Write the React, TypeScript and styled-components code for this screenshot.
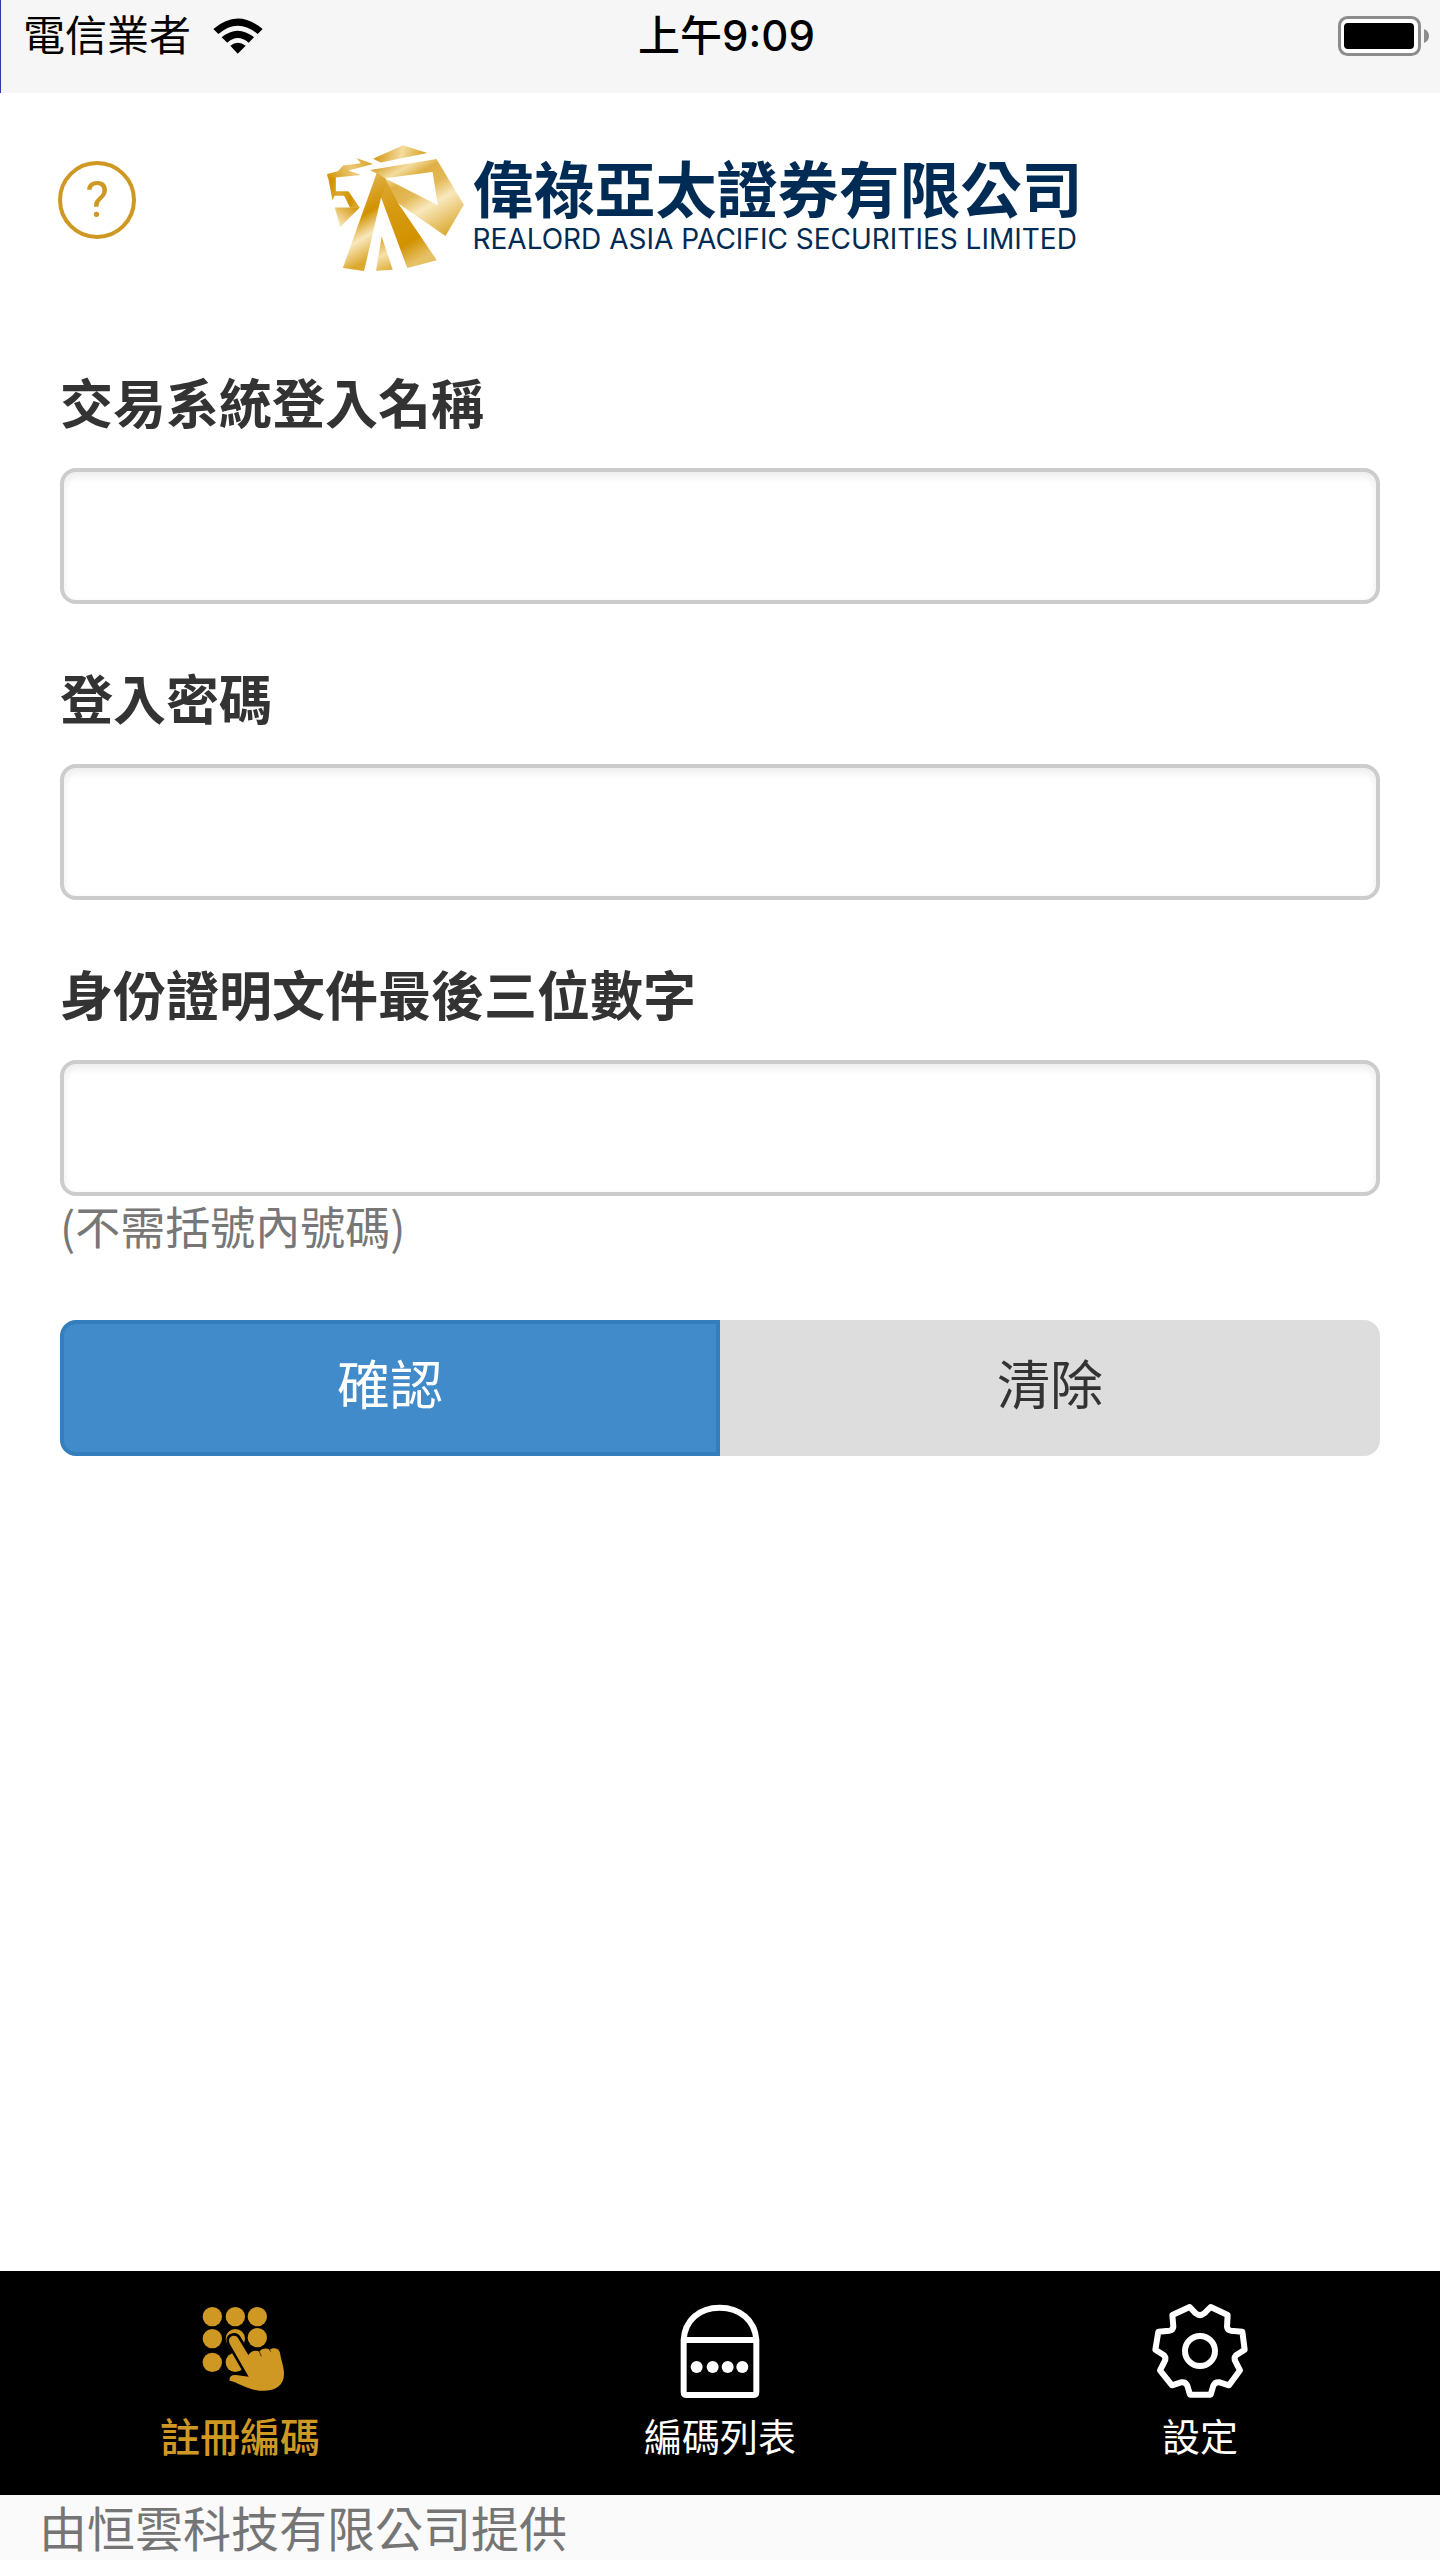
import React, { useState } from "react";
import styled, { createGlobalStyle, css } from "styled-components";

const gold = "#cf9823";
const navy = "#002b54";
const sans = `"Noto Sans CJK TC", "Liberation Sans", sans-serif`;

const GlobalStyle = createGlobalStyle`
  *, *::before, *::after { box-sizing: border-box; }
  body { margin: 0; background: #fff; color: #333; font-family: ${sans}; }
  button, input { font-family: inherit; }
`;

const Page = styled.div`
  display: flex;
  flex-direction: column;
  min-height: 100vh;
`;

const StatusBar = styled.div`
  display: grid;
  grid-template-columns: 1fr auto 1fr;
  align-items: center;
  height: 93px;
  padding: 0 10px 22px 22px;
  border-left: 1px solid #3038a8;
  background: #f6f6f6;
  color: #000;
  font-family: Inter, ${sans};
  font-size: 42px;
  line-height: 60px;
`;

const Carrier = styled.div`
  display: flex;
  align-items: center;
  gap: 22px;
`;

const Clock = styled.time`
  font-weight: 500;
`;

const Battery = styled.svg`
  justify-self: end;
`;

const Header = styled.header`
  display: grid;
  grid-template-columns: 78px 1fr 78px;
  align-items: start;
  padding: 52px 60px 0 58px;
`;

const HelpButton = styled.button`
  width: 78px;
  height: 78px;
  margin-top: 16px;
  padding: 0;
  border: 4px solid ${gold};
  border-radius: 50%;
  background: none;
  color: ${gold};
  font-family: Roboto, sans-serif;
  font-size: 50px;
  font-weight: 400;
  line-height: 68px;
`;

const Brand = styled.div`
  display: flex;
  justify-content: center;
  gap: 8px;
  padding-right: 28px;
  color: ${navy};
`;

const BrandText = styled.div`
  display: flex;
  flex-direction: column;
  padding-top: 6px;
  white-space: nowrap;
`;

const BrandName = styled.span`
  font-size: 61px;
  font-weight: 700;
  line-height: 72px;
`;

const BrandLatin = styled.span`
  font-family: Inter, sans-serif;
  font-size: 28px;
  line-height: 32px;
`;

const Form = styled.form`
  flex: 1;
  padding: 93px 60px 60px;
`;

const Field = styled.div`
  display: flex;
  flex-direction: column;
  margin-bottom: 56px;
`;

const Label = styled.label`
  margin-bottom: 30px;
  font-size: 53px;
  font-weight: 700;
  line-height: 74px;
`;

const TextInput = styled.input`
  width: 100%;
  height: 136px;
  padding: 24px 40px;
  border: 4px solid #ccc;
  border-radius: 16px;
  background: #fff;
  box-shadow: inset 0 4px 8px rgba(0, 0, 0, 0.08);
  color: #555;
  font-size: 53px;
  outline: none;
`;

const Hint = styled.small`
  margin-bottom: 8px;
  color: #777;
  font-size: 45px;
  line-height: 60px;
`;

const Actions = styled.div`
  display: flex;
`;

const ActionButton = styled.button<{ $primary?: boolean }>`
  flex: 1;
  height: 136px;
  padding: 0 0 12px;
  border: 4px solid #ddd;
  border-radius: 0 16px 16px 0;
  background: #ddd;
  color: #333;
  font-size: 53px;
  line-height: 74px;
  ${(p) =>
    p.$primary &&
    css`
      border-color: #357ebd;
      border-radius: 16px 0 0 16px;
      background: #428bca;
      color: #fff;
    `}
`;

const TabBar = styled.nav`
  display: grid;
  grid-template-columns: repeat(3, 1fr);
  height: 224px;
  padding-top: 32px;
  background: #000;
`;

const Tab = styled.a<{ $active?: boolean }>`
  display: flex;
  flex-direction: column;
  align-items: center;
  gap: 8px;
  color: ${(p) => (p.$active ? gold : "#fff")};
  font-size: ${(p) => (p.$active ? 40 : 38)}px;
  font-weight: ${(p) => (p.$active ? 500 : 400)};
  line-height: 56px;
  text-decoration: none;
`;

const Footer = styled.footer`
  padding: 0 39px 3px;
  background: #fafafa;
  color: #757575;
  font-size: 48px;
  line-height: 62px;
`;

const WifiIcon = () => (
  <svg width="50" height="36" viewBox="640 50 150 108" aria-hidden="true">
    <path d="M641 83Q714 20 789 83L774 98Q714 48 656 98Z" />
    <path d="M666 108Q714 68 763 108L747 124Q714 96 683 124Z" />
    <path d="M692 133Q714 116 738 133L714 157Z" />
  </svg>
);

const BatteryIcon = () => (
  <Battery width="92" height="40" viewBox="0 0 92 40" role="img" aria-label="電池">
    <rect x="1.5" y="1.5" width="80" height="37" rx="8" fill="#fff" stroke="#8c8c8c" strokeWidth="3" />
    <rect x="6" y="7" width="70" height="26" rx="4" />
    <path d="M86 13q5 2 5 7t-5 7z" fill="#8c8c8c" />
  </Battery>
);

const LionLogo = () => (
  <svg width="137" height="126" viewBox="54 44 411 379" aria-hidden="true">
    <defs>
      <linearGradient id="crown" gradientUnits="userSpaceOnUse" x1="205" y1="60" x2="350" y2="90">
        <stop offset="0" stopColor="#d79c1c" />
        <stop offset=".5" stopColor="#f3dca0" />
        <stop offset="1" stopColor="#d79c14" />
      </linearGradient>
      <linearGradient id="brow" gradientUnits="userSpaceOnUse" x1="54" y1="150" x2="190" y2="90">
        <stop offset="0" stopColor="#d29200" />
        <stop offset=".55" stopColor="#ebc878" />
        <stop offset="1" stopColor="#d9a322" />
      </linearGradient>
      <linearGradient id="face" gradientUnits="userSpaceOnUse" x1="60" y1="170" x2="150" y2="205">
        <stop offset="0" stopColor="#d29200" />
        <stop offset=".35" stopColor="#dba72c" />
        <stop offset=".75" stopColor="#d29200" />
        <stop offset="1" stopColor="#dba72c" />
      </linearGradient>
      <linearGradient id="chin" gradientUnits="userSpaceOnUse" x1="140" y1="225" x2="90" y2="285">
        <stop offset="0" stopColor="#d29200" />
        <stop offset="1" stopColor="#f8e6b8" />
      </linearGradient>
      <linearGradient id="mane" gradientUnits="userSpaceOnUse" x1="0" y1="0" x2="250" y2="435">
        <stop offset=".4" stopColor="#dca93a" />
        <stop offset=".48" stopColor="#f3dca0" />
        <stop offset=".55" stopColor="#dfb045" />
        <stop offset=".65" stopColor="#e3b956" />
        <stop offset=".75" stopColor="#f9e8bd" />
        <stop offset=".96" stopColor="#dba72c" />
      </linearGradient>
      <linearGradient id="hindleg" gradientUnits="userSpaceOnUse" x1="0" y1="0" x2="250" y2="435">
        <stop offset=".42" stopColor="#e0b24c" />
        <stop offset=".5" stopColor="#dca632" />
        <stop offset=".65" stopColor="#d79b12" />
        <stop offset=".88" stopColor="#d29200" />
        <stop offset="1" stopColor="#e6c065" />
      </linearGradient>
      <linearGradient id="foreleg" gradientUnits="userSpaceOnUse" x1="0" y1="0" x2="250" y2="435">
        <stop offset=".42" stopColor="#e0b24c" />
        <stop offset=".6" stopColor="#d29200" />
        <stop offset=".72" stopColor="#f9e8bd" />
        <stop offset=".85" stopColor="#dba72c" />
      </linearGradient>
      <linearGradient id="tail" gradientUnits="userSpaceOnUse" x1="205" y1="330" x2="240" y2="420">
        <stop offset="0" stopColor="#dba72c" />
        <stop offset=".5" stopColor="#f6e1aa" />
        <stop offset="1" stopColor="#e0b040" />
      </linearGradient>
    </defs>
    <path fill="url(#crown)" d="M282 45L355 68L215 97L192 85Z" />
    <path fill="url(#face)" d="M55 133L80 138V183H118L152 233H123L105 197H76L70 210Z" />
    <path fill="url(#brow)" d="M54 131L86 123L102 106L155 99L142 83L192 101L118 121L155 134L80 142L56 144Z" />
    <path fill="url(#chin)" d="M77 232H152L93 291Z" />
    <path fill="url(#mane)" fillRule="evenodd" d="M183 119L383 86L465 224L410 318L268 220L203 130ZM228 144L387 225L371 125Z" />
    <path fill="url(#hindleg)" d="M203 130L228 144L268 220L384 391L295 414L216 202Z" />
    <path fill="url(#foreleg)" d="M203 128L228 144L232 160L216 202L165 423L101 414Z" />
    <path fill="url(#tail)" d="M218 319L251 419L201 422Z" />
  </svg>
);

const KeypadIcon = () => (
  <svg width="96" height="96" viewBox="186 129 288 288" fill={gold} aria-hidden="true">
    <circle cx="247" cy="170" r="29" />
    <circle cx="316" cy="170" r="29" />
    <circle cx="382" cy="170" r="29" />
    <circle cx="247" cy="236" r="29" />
    <circle cx="316" cy="236" r="29" />
    <circle cx="382" cy="233" r="29" />
    <circle cx="247" cy="307" r="29" />
    <circle cx="316" cy="307" r="29" />
    <path
      d="M324 234C318 223 297 226 297 242C297 248 300 253 303 258L356 350L318 345C304 344 297 350 299 362C325 367 350 388 388 392C432 396 462 379 462 342C462 317 453 301 450 278C447 263 426 262 419 270C411 262 395 265 388 275C378 269 363 272 355 285Z"
      stroke="#000"
      strokeWidth="16"
      strokeLinejoin="round"
      paintOrder="stroke"
    />
    <path d="M388 275L394 289M419 270L422 275" stroke="#000" strokeWidth="2" />
  </svg>
);

const CodeListIcon = () => (
  <svg width="96" height="96" viewBox="156 129 288 288" fill="none" stroke="#fff" strokeWidth="18" aria-hidden="true">
    <path d="M191 240V396Q191 405 200 405H400Q409 405 409 396V240C405 181 360 143 299 143S194 181 191 240H409" strokeLinejoin="round" />
    <g fill="#fff" stroke="none">
      <circle cx="230" cy="321" r="18" />
      <circle cx="278" cy="321" r="18" />
      <circle cx="323" cy="321" r="18" />
      <circle cx="367" cy="321" r="18" />
    </g>
  </svg>
);

const GearIcon = () => (
  <svg width="96" height="96" viewBox="156 129 288 288" fill="none" stroke="#fff" strokeWidth="18" strokeLinejoin="round" aria-hidden="true">
    <path d="M269 141L287 160Q300 171 313 160L332 141L383 165L381 200Q382 210 392 212L427 215L434 269L408 286Q400 295 407 306L420 331L387 376L359 367Q345 365 340 377L332 404H270L262 377Q257 365 243 367L216 376L180 331L193 306Q200 295 192 286L166 269L175 215L209 212Q219 210 220 200L217 165Z" />
    <circle cx="300" cy="273" r="45" />
  </svg>
);

const fields = [
  { id: "login-name", label: "交易系統登入名稱", type: "text" },
  { id: "password", label: "登入密碼", type: "password" },
  { id: "id-digits", label: "身份證明文件最後三位數字", type: "text", hint: "(不需括號內號碼)" },
];

const tabs = [
  { id: "register", label: "註冊編碼", Icon: KeypadIcon },
  { id: "codes", label: "編碼列表", Icon: CodeListIcon },
  { id: "settings", label: "設定", Icon: GearIcon },
];

export default function App() {
  const [active, setActive] = useState("register");

  return (
    <Page>
      <GlobalStyle />
      <StatusBar>
        <Carrier>
          <span>電信業者</span>
          <WifiIcon />
        </Carrier>
        <Clock>上午9:09</Clock>
        <BatteryIcon />
      </StatusBar>

      <Header>
        <HelpButton type="button" aria-label="說明">?</HelpButton>
        <Brand>
          <LionLogo />
          <BrandText>
            <BrandName>偉祿亞太證券有限公司</BrandName>
            <BrandLatin>REALORD ASIA PACIFIC SECURITIES LIMITED</BrandLatin>
          </BrandText>
        </Brand>
      </Header>

      <Form onSubmit={(e) => e.preventDefault()}>
        {fields.map((f) => (
          <Field key={f.id}>
            <Label htmlFor={f.id}>{f.label}</Label>
            <TextInput id={f.id} name={f.id} type={f.type} aria-describedby={f.hint ? `${f.id}-hint` : undefined} />
            {f.hint && <Hint id={`${f.id}-hint`}>{f.hint}</Hint>}
          </Field>
        ))}
        <Actions>
          <ActionButton type="submit" $primary>確認</ActionButton>
          <ActionButton type="reset">清除</ActionButton>
        </Actions>
      </Form>

      <TabBar>
        {tabs.map(({ id, label, Icon }) => (
          <Tab
            key={id}
            href={`#${id}`}
            $active={id === active}
            aria-current={id === active ? "page" : undefined}
            onClick={() => setActive(id)}
          >
            <Icon />
            {label}
          </Tab>
        ))}
      </TabBar>
      <Footer>由恒雲科技有限公司提供</Footer>
    </Page>
  );
}
